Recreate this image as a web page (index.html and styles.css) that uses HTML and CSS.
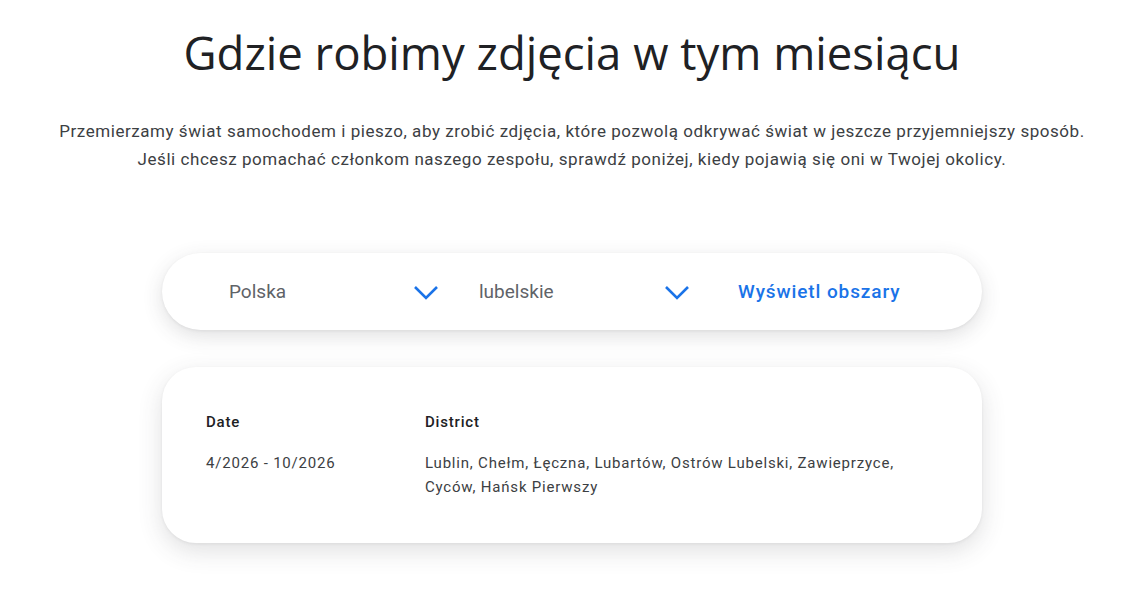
FILE: index.html
```html
<!DOCTYPE html>
<html lang="pl">
<head>
    <meta charset="UTF-8">
    <meta name="viewport" content="width=device-width, initial-scale=1.0">
    <title>Gdzie robimy zdjęcia</title>
    <link rel="stylesheet" href="styles.css">
</head>
<body>
    <main class="page">
        <h1 class="title">Gdzie robimy zdjęcia w tym miesiącu</h1>
        <p class="intro">
            Przemierzamy świat samochodem i pieszo, aby zrobić zdjęcia, które pozwolą odkrywać świat w jeszcze przyjemniejszy sposób.<br>
            Jeśli chcesz pomachać członkom naszego zespołu, sprawdź poniżej, kiedy pojawią się oni w Twojej okolicy.
        </p>

        <div class="filter-bar">
            <div class="select">
                <span class="select-value">Polska</span>
                <svg class="chevron" width="26" height="16" viewBox="0 0 26 16"><path d="M2 3l11 11L24 3" fill="none" stroke="#1a73e8" stroke-width="2.6"/></svg>
            </div>
            <div class="select">
                <span class="select-value">lubelskie</span>
                <svg class="chevron" width="26" height="16" viewBox="0 0 26 16"><path d="M2 3l11 11L24 3" fill="none" stroke="#1a73e8" stroke-width="2.6"/></svg>
            </div>
            <button class="show-button">Wyświetl obszary</button>
        </div>

        <div class="results-card">
            <table class="results">
                <thead>
                    <tr>
                        <th class="col-date">Date</th>
                        <th>District</th>
                    </tr>
                </thead>
                <tbody>
                    <tr>
                        <td class="col-date">4/2026 - 10/2026</td>
                        <td>Lublin, Chełm, Łęczna, Lubartów, Ostrów Lubelski, Zawieprzyce,<br>Cyców, Hańsk Pierwszy</td>
                    </tr>
                </tbody>
            </table>
        </div>
    </main>
</body>
</html>
```

FILE: styles.css
```css
body {
    margin: 0;
    background: #fff;
    color: #202124;
    font-family: Roboto, "Liberation Sans", sans-serif;
}

.page {
    display: flex;
    flex-direction: column;
    align-items: center;
    padding: 22px 0 50px 4px;
}

.title {
    margin: 0;
    font-family: "Open Sans", Roboto, sans-serif;
    font-weight: 400;
    font-size: 45.5px;
    line-height: 60px;
    color: #202124;
}

.intro {
    margin: 35px 0 0;
    text-align: center;
    font-size: 17px;
    line-height: 28px;
    letter-spacing: 0.55px;
    color: #3c4043;
}

.filter-bar {
    display: flex;
    align-items: center;
    width: 820px;
    height: 77px;
    margin-top: 80px;
    border-radius: 39px;
    background: #fff;
    box-shadow: 0 6px 20px rgba(60, 64, 67, 0.16), 0 1px 3px rgba(60, 64, 67, 0.08);
    box-sizing: border-box;
    padding-left: 67px;
}

.select {
    display: flex;
    align-items: center;
    justify-content: space-between;
    width: 211px;
    margin-right: 48px;
}

.select:first-child {
    width: 210px;
    margin-right: 40px;
}

.select-value {
    font-size: 19px;
    color: #5f6368;
}

.chevron {
    display: block;
}

.show-button {
    border: none;
    background: none;
    padding: 0;
    font-family: Roboto, sans-serif;
    font-size: 19px;
    font-weight: 500;
    letter-spacing: 0.9px;
    color: #1a73e8;
    cursor: pointer;
}

.results-card {
    width: 820px;
    margin-top: 37px;
    border-radius: 34px;
    background: #fff;
    box-shadow: 0 8px 24px rgba(60, 64, 67, 0.16), 0 1px 3px rgba(60, 64, 67, 0.08);
    box-sizing: border-box;
    padding: 43px 44px 44px;
}

.results {
    border-collapse: collapse;
    font-size: 15px;
    line-height: 24px;
    letter-spacing: 0.8px;
}

.results th {
    text-align: left;
    font-weight: 500;
    color: #202124;
    padding: 0 0 17px;
}

.results td {
    vertical-align: top;
    color: #3c4043;
    padding: 0;
}

.col-date {
    width: 219px;
}
```
